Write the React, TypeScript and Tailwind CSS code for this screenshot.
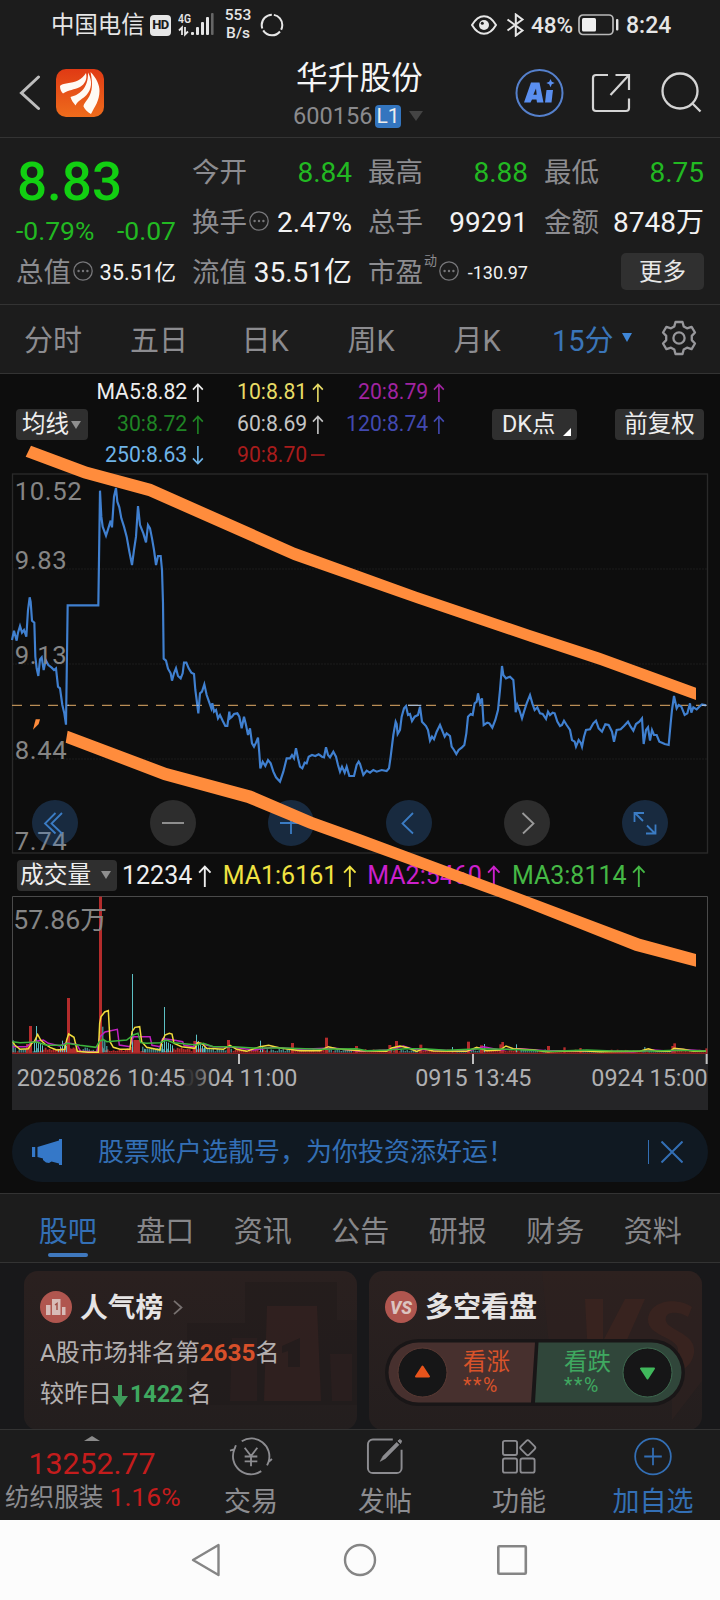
import React from "react";

const PRICE =
  "36,810 42,782 50,812 54,788 60,768 66,788 72,780 79,800 84,720 89,682 92,696 96,752 103,758 106,860 110,895 115,918 120,868 125,862 131,900 137,870 145,885 155,893 162,900 168,895 174,950 180,955 187,1005 193,1030 198,1064 203,706 295,706 300,362 304,440 308,470 318,497 324,478 332,452 336,472 342,380 348,354 352,395 358,412 364,445 372,470 380,500 388,545 396,585 402,540 408,500 414,408 420,465 430,490 438,517 444,465 450,475 456,505 462,540 468,585 474,558 482,558 486,600 489,700 491,866 498,872 504,896 512,910 516,932 522,910 528,895 534,918 542,925 548,910 552,878 559,878 566,895 574,908 582,912 586,960 590,990 595,1030 600,970 606,965 613,943 620,975 627,995 634,1015 637,1000 642,1025 648,1020 654,1045 660,1035 668,1052 676,1068 682,1068 688,1025 690,1045 696,1040 702,1032 712,1030 718,1040 725,1075 732,1040 738,1065 744,1095 750,1075 756,1120 762,1130 768,1118 774,1103 778,1150 781,1195 788,1175 796,1188 804,1170 812,1180 820,1205 828,1222 840,1235 850,1205 860,1165 870,1165 876,1155 882,1165 888,1135 894,1165 900,1190 907,1195 914,1178 920,1180 926,1160 936,1155 946,1158 956,1153 966,1160 972,1162 978,1132 984,1155 990,1162 1000,1145 1008,1160 1014,1185 1020,1205 1026,1190 1034,1208 1040,1190 1048,1218 1062,1218 1070,1185 1076,1175 1080,1182 1090,1215 1100,1202 1110,1208 1120,1200 1130,1205 1145,1200 1160,1203 1167,1195 1172,1160 1180,1095 1187,1055 1190,1062 1193,1092 1200,1080 1205,1040 1212,1015 1218,1008 1224,1035 1230,1032 1236,1053 1244,1040 1254,1035 1260,1010 1266,1055 1278,1068 1284,1080 1290,1112 1296,1100 1302,1108 1310,1085 1320,1065 1328,1085 1334,1100 1340,1090 1350,1098 1355,1130 1362,1140 1369,1152 1376,1140 1386,1132 1393,1125 1399,1090 1404,1040 1412,1032 1418,1035 1424,1000 1430,995 1434,970 1440,1000 1446,985 1451,1065 1462,1058 1468,1060 1477,1073 1486,1050 1494,1020 1500,960 1506,888 1510,915 1518,925 1530,920 1540,930 1546,1000 1547,1027 1552,1005 1558,1020 1566,1045 1572,1025 1580,1000 1590,975 1597,1000 1604,1020 1612,1012 1620,1030 1628,1032 1638,1047 1644,1025 1650,1035 1658,1028 1664,1030 1672,1055 1680,1068 1686,1065 1692,1052 1700,1065 1710,1080 1716,1110 1724,1115 1728,1130 1736,1110 1742,1118 1746,1130 1752,1100 1758,1080 1770,1078 1780,1060 1788,1052 1796,1075 1806,1085 1816,1063 1826,1065 1836,1085 1842,1115 1850,1080 1862,1078 1872,1068 1884,1055 1892,1070 1900,1082 1908,1062 1918,1055 1926,1045 1931,1122 1938,1080 1944,1072 1950,1112 1956,1080 1962,1095 1970,1095 1978,1115 1986,1118 1994,1122 2006,1125 2012,1060 2016,1020 2022,978 2030,1015 2036,1005 2044,1010 2054,1035 2062,1030 2070,1000 2074,1028 2080,1012 2090,1018 2098,1010 2106,1003 2118,1006";

const VMA1 =
  "38,545 45,556 60,568 85,566 95,550 103,545 113,523 122,540 135,552 150,562 170,570 195,568 200,540 206,522 222,532 232,574 265,577 295,577 299,490 303,470 314,456 325,452 330,545 340,562 360,568 390,568 396,515 405,502 419,500 425,545 440,562 480,570 486,545 495,525 508,520 516,522 522,550 545,560 585,565 592,548 605,550 620,565 670,568 690,556 710,568 740,574 780,560 806,556 840,564 900,572 960,572 985,560 1010,566 1080,572 1160,574 1175,564 1200,558 1225,564 1250,574 1270,566 1300,573 1400,574 1430,562 1460,572 1500,570 1518,558 1540,566 1600,570 1640,575 1740,572 1800,575 1920,574 1945,566 1970,574 2010,574 2022,565 2050,568 2080,574 2118,574";
const VMA2 =
  "38,560 80,560 100,545 130,540 145,550 180,558 200,548 230,553 242,574 290,576 300,530 315,516 352,508 358,555 390,560 400,530 450,530 456,556 480,560 488,536 520,540 548,545 552,556 580,560 590,548 640,560 700,562 760,570 820,562 900,568 1000,564 1080,574 1170,570 1210,558 1240,568 1300,570 1400,574 1450,560 1500,570 1560,566 1640,572 1760,572 1900,575 1960,570 2010,574 2040,568 2118,573";
const VMA3 =
  "38,545 60,548 110,546 140,556 190,556 200,550 240,556 288,562 298,545 310,538 320,545 380,540 400,525 414,520 422,548 440,550 480,548 500,540 520,548 560,552 590,555 610,550 640,560 700,560 760,564 850,564 960,568 1070,566 1100,572 1160,570 1220,566 1270,566 1340,571 1440,566 1520,568 1580,570 1660,574 1760,570 1840,573 1960,573 2030,571 2118,573";

const RED_BARS: number[][] = [
  [297, 9, 110], [201, 9, 414], [87, 9, 498], [78, 8, 552], [302, 7, 560], [580, 8, 543], [681, 9, 540],
  [873, 9, 549], [975, 9, 533], [1065, 9, 558], [1165, 9, 555], [1185, 9, 543], [1258, 9, 554],
  [1401, 9, 545], [1440, 9, 556], [1498, 8, 553], [1504, 8, 546], [1641, 9, 558], [1690, 7, 562],
  [1738, 7, 564], [2014, 8, 558], [2020, 8, 550], [2116, 6, 565], [400, 20, 540], [392, 8, 560], [210, 22, 566],
];
const CYAN_BARS: number[][] = [
  [38, 541], [108, 498], [102, 540], [114, 545], [120, 550], [126, 556], [174, 568], [180, 560], [186, 542], [192, 552],
  [198, 558], [307, 500], [313, 540], [319, 558], [396, 342], [427, 560], [433, 566], [492, 441], [486, 552], [498, 545],
  [504, 548], [510, 552], [516, 556], [588, 524], [594, 543], [600, 552], [606, 558], [612, 562], [780, 542], [786, 560],
  [1356, 561], [1452, 552], [1548, 553], [1933, 561],
];

const noise = Array.from({ length: 346 }, (_, i) => {
  const r = Math.abs(Math.sin(i * 12.9898) * 43758.5453) % 1;
  const x = 38 + i * 6;
  const base = x < 650 ? 10 : x < 1100 ? 7 : 5;
  const cyan = Math.sin(i / 5) + r > 0.9;
  return { x, h: 3 + r * base, cyan };
});

function Up({ className = "", dir = "up", h = 20 }: { className?: string; dir?: "up" | "down" | "flat"; h?: number }) {
  return (
    <svg className={className} width={h * 0.62} height={h} viewBox="0 0 12.4 20" fill="none" stroke="currentColor" strokeWidth="1.7">
      {dir === "up" && <path d="M6.2 20V1.5M1 7l5.2-5.6L11.4 7" />}
      {dir === "down" && <path d="M6.2 0v18.5M1 13l5.2 5.6 5.2-5.6" />}
      {dir === "flat" && <path d="M-1 9.5h14.4" />}
    </svg>
  );
}

function Dots() {
  return (
    <svg width="20" height="20" viewBox="0 0 20 20" className="shrink-0">
      <circle cx="10" cy="10" r="9.2" fill="none" stroke="#77777a" strokeWidth="1.3" />
      <g fill="#77777a">
        <circle cx="5.6" cy="10" r="1.2" />
        <circle cx="10" cy="10" r="1.2" />
        <circle cx="14.4" cy="10" r="1.2" />
      </g>
    </svg>
  );
}

function StatusBar() {
  return (
    <div className="flex h-[50px] items-center pl-[51px] text-[#e6e6e6]">
      <span className="mt-px w-[99px] whitespace-nowrap text-[23.4px] leading-none">中国电信</span>
      <span className="flex h-[21px] w-[21px] shrink-0 items-center justify-center rounded-[4px] bg-[#e6e6e6] text-[13px] font-extrabold tracking-[-0.5px] text-[#1c1c1c]">HD</span>
      <svg className="ml-[7px]" width="38" height="26" viewBox="0 0 38 26">
        <text x="0" y="11" fontSize="12.5" fontWeight="600" fill="#e6e6e6" textLength="13" lengthAdjust="spacingAndGlyphs">4G</text>
        <g stroke="#e6e6e6" strokeWidth="1.8" fill="none">
          <path d="M4 23v-7.500l-3 3M7 15v7.500l3-3" />
        </g>
        <g fill="#e6e6e6">
          <rect x="13" y="20" width="3" height="3" rx="1" />
          <rect x="18" y="15" width="3" height="8" rx="1" />
          <rect x="23" y="10" width="3" height="13" rx="1" />
          <rect x="28" y="5" width="3" height="18" rx="1" />
          <rect x="33" y="1" width="2.600" height="22" rx="1" fill="#666" />
        </g>
      </svg>
      <span className="-mt-[2px] ml-[7px] flex w-[30px] flex-col items-center text-[15.500px] font-medium leading-[18.300px]">
        <span>553</span>
        <span>B/s</span>
      </span>
      <svg className="ml-[7px] -mt-px" width="24" height="24" viewBox="0 0 24 24" fill="none" stroke="#e6e6e6" strokeWidth="2">
        <circle cx="12" cy="12" r="10.300" strokeDasharray="19.500 2.070" strokeDashoffset="-7" />
      </svg>
      <svg className="ml-[187px] -mt-px" width="26" height="20" viewBox="0 0 26 20" fill="none" stroke="#e6e6e6" strokeWidth="2">
        <path d="M1 10C4.500 4 8.500 1.200 13 1.200S21.500 4 25 10c-3.500 6-7.500 8.800-12 8.800S4.500 16 1 10z" />
        <circle cx="13" cy="10" r="5" fill="#e6e6e6" stroke="none" />
        <circle cx="11.300" cy="8.300" r="1.500" fill="#1c1c1c" stroke="none" />
      </svg>
      <svg className="ml-[9px] -mt-px" width="20" height="24" viewBox="0 0 20 24" fill="none" stroke="#e6e6e6" strokeWidth="2">
        <path d="M1.500 6.500l15 11-6.700 5V1.500l6.700 5-15 11" />
      </svg>
      <span className="ml-[5px] w-[47px] text-[22.500px] font-medium leading-none">48%</span>
      <svg className="-mt-px" width="41" height="22" viewBox="0 0 41 22">
        <rect x="1" y="1" width="34" height="19.500" rx="4" fill="none" stroke="#b8b8b8" strokeWidth="1.700" />
        <rect x="4" y="4" width="14" height="13.500" rx="1.500" fill="#f0f0f0" />
        <rect x="38" y="5" width="2.400" height="11.500" rx="1" fill="#e6e6e6" />
      </svg>
      <span className="ml-[7px] text-[23px] font-medium leading-none">8:24</span>
    </div>
  );
}

function Header() {
  return (
    <div className="flex h-[88px] items-start border-b border-[#333] pl-[19px]">
      <svg className="mt-[25px]" width="22" height="36" viewBox="0 0 22 36" fill="none" stroke="#bdbdbd" strokeWidth="3" strokeLinecap="round">
        <path d="M19.500 2L2.500 18 19.500 33.500" />
      </svg>
      <svg className="ml-[15px] mt-[19px]" width="48" height="48" viewBox="0 0 48 48">
        <defs>
          <linearGradient id="logo" x1="0" y1="0" x2="0" y2="1">
            <stop offset="0" stopColor="#e03a14" />
            <stop offset="1" stopColor="#ee6c1c" />
          </linearGradient>
        </defs>
        <rect width="48" height="48" rx="10" fill="url(#logo)" />
        <g fill="#fffaf4">
          <path d="M4 17c2-3 12-2.500 18-5.500 3.500-2 6-4.500 8-7.500 1.500 6-1 11-6 14-6 3-11 2.500-17 6.500C5 23 4 20 4 17z" />
          <path d="M14.500 28c8-2 18-8 17.500-24.500 5 9 3.500 17-1.500 22.500-4 4-8.500 5.500-11 10.500-2-2.500-4-5-5-8.500z" />
          <path d="M34.500 3c6 6 9 13 9 19 0 10-5 16-8.500 23-3.500-2-6-4-7.500-7.500 1-7 12.500-9 7-34.500z" />
        </g>
      </svg>
      <div className="ml-[192px] flex w-[131px] flex-col">
        <div className="mt-[11px] whitespace-nowrap text-[31.700px] leading-[36px] text-[#f5f5f5]">华升股份</div>
        <div className="mt-[2px] flex items-center">
          <span className="-ml-[3px] w-[82px] text-[23.600px] leading-[34px] text-[#8a8a8d]">600156</span>
          <span className="flex h-[23px] w-[26px] shrink-0 items-center justify-center rounded-[4px] bg-[#3375bf] text-[21px] leading-none text-[#eee]">L1</span>
          <svg className="ml-[8px] shrink-0" width="14" height="10">
            <path d="M0 0h14l-7 10z" fill="#444" />
          </svg>
        </div>
      </div>
      <svg className="ml-[88px] mt-[18px]" width="50" height="50" viewBox="0 0 50 50">
        <circle cx="24.500" cy="25" r="23" fill="none" stroke="#5580cc" strokeWidth="2" />
        <path d="M16 14.500h8.500l4 20h-6.500l-.500-3h-4.500l-1.500 3H9zM21 20.500l-2.700 6.300h3.400z" fill="#5a8ff0" fillRule="evenodd" />
        <path d="M31.500 22h6.500l-1.500 12.500h-6.500z" fill="#5a8ff0" />
        <path d="M35.500 11l1.300 2.700 2.900 1.300-2.900 1.300-1.300 2.900-1.300-2.900-2.900-1.300 2.900-1.300z" fill="#5a8ff0" />
      </svg>
      <svg className="ml-[26px] mt-[23px]" width="42" height="42" viewBox="0 0 42 42" fill="none" stroke="#d4d4d4" strokeWidth="2.200">
        <path d="M17 2H5a3 3 0 00-3 3v30a3 3 0 003 3h30a3 3 0 003-3V25.500M24.500 2H38v15M37.500 2.500L19.500 22" />
      </svg>
      <svg className="ml-[28px] mt-[22px]" width="42" height="42" viewBox="0 0 42 42" fill="none" stroke="#d4d4d4" strokeWidth="2.300">
        <circle cx="19" cy="19" r="17.500" />
        <path d="M31.500 31.500l8 8" />
      </svg>
    </div>
  );
}

const lab = "text-[27.500px] text-[#8c8c90] whitespace-nowrap";

function Quote() {
  return (
    <div className="grid h-[167px] grid-cols-4 gap-x-4 border-b border-[#333] px-4 pt-[10px] text-[28px] text-[#f2f2f2]">
      <div>
        <div className="pl-px text-[53px] font-medium leading-[68px] text-[#12cf12]">8.83</div>
        <div className="flex justify-between text-[26.500px] leading-[29px] text-[#22b922]">
          <span>-0.79%</span>
          <span>-0.07</span>
        </div>
        <div className="mt-[3px] flex h-[50px] items-center whitespace-nowrap leading-[50px]">
          <span className={lab}>总值</span>
          <span className="ml-[2px] -mt-1"><Dots /></span>
          <span className="ml-auto text-[21.800px]">35.51亿</span>
        </div>
      </div>
      <div className="leading-[50px]">
        <div className="flex h-[50px] justify-between">
          <span className={lab}>今开</span>
          <span className="text-[#22b922]">8.84</span>
        </div>
        <div className="flex h-[50px] items-center whitespace-nowrap">
          <span className={lab}>换手</span>
          <span className="ml-[2px] -mt-1"><Dots /></span>
          <span className="ml-auto">2.47%</span>
        </div>
        <div className="flex h-[50px] justify-between whitespace-nowrap">
          <span className={lab}>流值</span>
          <span>35.51亿</span>
        </div>
      </div>
      <div className="leading-[50px]">
        <div className="flex h-[50px] justify-between">
          <span className={lab}>最高</span>
          <span className="text-[#22b922]">8.88</span>
        </div>
        <div className="flex h-[50px] justify-between">
          <span className={lab}>总手</span>
          <span>99291</span>
        </div>
        <div className="flex h-[50px] items-center whitespace-nowrap">
          <span className={lab}>市盈</span>
          <span className="-mt-[25px] ml-[1px] text-[13px] text-[#8c8c90]">动</span>
          <span className="-mt-1 ml-[2px]"><Dots /></span>
          <span className="ml-auto text-[18px]">-130.97</span>
        </div>
      </div>
      <div className="leading-[50px]">
        <div className="flex h-[50px] justify-between">
          <span className={lab}>最低</span>
          <span className="text-[#22b922]">8.75</span>
        </div>
        <div className="flex h-[50px] justify-between whitespace-nowrap">
          <span className={lab}>金额</span>
          <span>8748万</span>
        </div>
        <div className="ml-auto mt-[5px] flex h-[37px] w-[83px] items-center justify-center rounded-[5px] bg-[#303030] text-[23.500px] text-[#e8e8e8]">更多</div>
      </div>
    </div>
  );
}

function PeriodTabs() {
  return (
    <div className="flex h-[69px] items-center border-b border-[#333] text-[29px] text-[#8c8c90]">
      {["分时", "五日", "日K", "周K", "月K"].map((t) => (
        <span key={t} className="w-[106px] pt-[4px] text-center leading-[65px]">{t}</span>
      ))}
      <span className="ml-[22px] w-[70px] whitespace-nowrap pt-[4px] leading-[65px] text-[#3a75b8]">15分</span>
      <svg width="10" height="9" className="-mt-1"><path d="M0 0h10l-5 9z" fill="#3f87d8" /></svg>
      <svg className="-mt-[2px] ml-[29px]" width="36" height="36" viewBox="0 0 36 36" fill="none" stroke="#97979b" strokeWidth="2.300" strokeLinejoin="round">
        <path d="M14.500 2h7l1.200 4.400 3.300 1.900 4.600-1.500 3.400 5.700-3.200 3.400v4.200l3.200 3.400-3.400 5.700-4.600-1.500-3.300 1.900-1.200 4.400h-7l-1.200-4.400-3.300-1.900-4.600 1.500L2 23.500l3.200-3.400v-4.200L2 12.500l3.400-5.700L10 8.300l3.300-1.900z" />
        <circle cx="18" cy="18" r="5.600" />
      </svg>
    </div>
  );
}

const MA = [
  ["MA5:8.82", "text-[#eee]", "up"], ["10:8.81", "text-[#e8dc66]", "up"], ["20:8.79", "text-[#a024a0]", "up"],
  ["30:8.72", "text-[#1f8424]", "up"], ["60:8.69", "text-[#c4c4c4]", "up"], ["120:8.74", "text-[#4249b0]", "up"],
  ["250:8.63", "text-[#6fb4e8]", "down"], ["90:8.70", "text-[#a81c1c]", "flat"],
];

function Indicators() {
  return (
    <div className="flex h-[97px] items-start pl-4 pt-[2px]">
      <div className="mt-[33px] flex h-[31px] w-[72px] shrink-0 items-center gap-[2px] whitespace-nowrap rounded-[4px] bg-[#2f2f2f] pl-[6px] text-[23.500px] text-[#eee]">
        均线
        <svg width="10" height="8"><path d="M0 0h10l-5 8z" fill="#8f8f8f" /></svg>
      </div>
      <div className="grid shrink-0 grid-cols-[116px_120px_121px] text-[21.200px]">
        {MA.map(([t, c, d]) => (
          <div key={t} className={"flex h-[31.700px] items-center justify-end gap-[5px] whitespace-nowrap leading-[31.700px] " + c}>
            <span>{t}</span>
            <Up dir={d as "up"} h={19} className="mt-[1px] overflow-visible" />
          </div>
        ))}
      </div>
      <div className="ml-[47px] mt-[33px] flex h-[31px] w-[85px] shrink-0 items-center whitespace-nowrap rounded-[4px] bg-[#2f2f2f] pl-[10px] text-[23.300px] text-[#eee]">
        DK点
        <svg className="ml-[8px] mt-[14px]" width="8" height="8"><path d="M8 0v8H0z" fill="#fff" /></svg>
      </div>
      <div className="ml-[38px] mt-[33px] flex h-[31px] w-[89px] shrink-0 items-center justify-center whitespace-nowrap rounded-[4px] bg-[#2f2f2f] text-[23.500px] text-[#eee]">前复权</div>
    </div>
  );
}

const CONTROLS: { blue: boolean; d: string }[] = [
  { blue: true, d: "M23.500 13L13 23.500l10.500 10M30 13L19.500 23.500l10.500 10" },
  { blue: false, d: "M12 23h22" },
  { blue: true, d: "M12 23h22M23 12v22" },
  { blue: true, d: "M27 13L16.500 23.500l10.500 10" },
  { blue: false, d: "M18.500 13L29.500 23.500l-10.500 10" },
  { blue: true, d: "M21 21l-8-8M12.500 22V13H22M25 25.500l8 8M33.500 24.500v9H24" },
];

function PriceChart() {
  return (
    <div className="relative h-[386px]">
      <svg className="block" width="720" height="386" viewBox="0 303 2160 1158">
        <g stroke="#262626" strokeWidth="3" strokeDasharray="4 5">
          <path d="M37 597H2122M37 882H2122M37 1167H2122" />
        </g>
        <rect x="37.500" y="312" width="2085" height="1137" fill="none" stroke="#2a2a2a" strokeWidth="4" />
        <path d="M36 1006H2118" stroke="#b98d56" strokeWidth="4" strokeDasharray="30 24" />
        <polyline points={PRICE} fill="none" stroke="#4080d0" strokeWidth="6.500" strokeLinejoin="miter" />
        <path d="M203 1006h4M590 1006h6M1224 1006h40M2106 1006h14" stroke="#a8b8cc" strokeWidth="4" />
        <g fill="#858585" fontSize="77" letterSpacing="2">
          <text x="44" y="390">10.52</text>
          <text x="44" y="597">9.83</text>
          <text x="44" y="882">9.13</text>
          <text x="44" y="1167">8.44</text>
          <text x="44" y="1440">7.74</text>
        </g>
      </svg>
      <div className="absolute left-8 top-[329px] flex gap-[72px]">
        {CONTROLS.map((c, i) => (
          <div key={i} className={"h-[46px] w-[46px] rounded-full " + (c.blue ? "bg-[#3a84d8]/25" : "bg-[#2d2d2d]")}>
            <svg width="46" height="46" viewBox="0 0 46 46" fill="none" stroke={c.blue ? "#3b7cc4" : "#9a9a9a"} strokeWidth="1.800">
              <path d={c.d} />
            </svg>
          </div>
        ))}
      </div>
    </div>
  );
}

function VolumeHeader() {
  return (
    <div className="flex h-[38px] items-center pl-[17px] text-[25px] leading-[38px]">
      <div className="-mt-[2px] flex h-[31px] w-[100px] items-center gap-[10px] whitespace-nowrap rounded-[4px] bg-[#2f2f2f] pl-[3px] text-[23.700px] text-[#eee]">
        成交量
        <svg width="10" height="8"><path d="M0 0h10l-5 8z" fill="#8f8f8f" /></svg>
      </div>
      <span className="ml-[5px] w-[77px] text-[#eee]">12234</span>
      <Up h={22} className="-ml-[1px] -mt-[1px] text-[#eee]" />
      <span className="ml-[11px] w-[120px] text-[#f0e242]">MA1:6161</span>
      <Up h={22} className="-mt-[1px] text-[#f0e242]" />
      <span className="ml-[11px] w-[120px] text-[#cc20cc]">MA2:5460</span>
      <Up h={22} className="-mt-[1px] text-[#cc20cc]" />
      <span className="ml-[11px] w-[120px] text-[#45b845]">MA3:8114</span>
      <Up h={22} className="-mt-[1px] text-[#45b845]" />
    </div>
  );
}

function VolumeChart() {
  return (
    <svg className="block" width="720" height="217" viewBox="0 105 2160 651">
      <defs>
        <linearGradient id="fade">
          <stop offset="0" stopColor="#252527" />
          <stop offset="0.350" stopColor="#252527" stopOpacity="0.850" />
          <stop offset="1" stopColor="#252527" stopOpacity="0" />
        </linearGradient>
      </defs>
      <rect x="36" y="582" width="2088" height="168" fill="#252527" />
      <path d="M37.500 582V109.500H2122.500V582" fill="none" stroke="#4a4a4a" strokeWidth="3" />
      {noise.map((n) => (
        <rect key={n.x} x={n.x} y={578 - n.h * 1.2} width={n.cyan ? 3 : 5.5} height={n.h * 1.2} fill={n.cyan ? "#5cc0c4" : "#b42c2c"} />
      ))}
      {RED_BARS.map(([x, w, y]) => (
        <rect key={x} x={x} y={y} width={w} height={579 - y} fill="#b42c2c" />
      ))}
      {CYAN_BARS.map(([x, y]) => (
        <rect key={x} x={x} y={y} width="3" height={577 - y} fill="#5cc0c4" />
      ))}
      <path d="M36 580H2122" stroke="#8c2222" strokeWidth="4" />
      <g fill="none" strokeWidth="4.500">
        <polyline points={VMA2} stroke="#c020c0" />
        <polyline points={VMA1} stroke="#f0dc3c" />
        <polyline points={VMA3} stroke="#3cb43c" />
      </g>
      <text x="40" y="208" fontSize="80" fill="#858585">57.86万</text>
      <path d="M717 582v30M1419 582v30M2120 582v30" stroke="#c0c0c0" strokeWidth="6" />
      <g fill="#b0b0b2" fontSize="70">
        <text x="718" y="679" textAnchor="middle">0904 11:00</text>
        <rect x="545" y="615" width="95" height="80" fill="url(#fade)" />
        <text x="50" y="679">20250826 10:45</text>
        <text x="1420" y="679" textAnchor="middle">0915 13:45</text>
        <text x="2123" y="679" textAnchor="end">0924 15:00</text>
      </g>
    </svg>
  );
}

function Banner() {
  return (
    <div className="mx-3 mt-[10px] flex h-[60px] items-center rounded-full bg-[#101922] pl-[20px] text-[#336fb5]">
      <svg width="31" height="28" viewBox="0 0 31 28" fill="#3578c8">
        <path d="M0 9h3.200v10H0zM5.500 9L27 2.500V1h3v26h-3v-1.500l-7.500-2L17 25l-3-.500-3-2.500V20.500L5.500 19z" />
      </svg>
      <span className="ml-[35px] w-[550px] whitespace-nowrap text-[26px] leading-[60px]">股票账户选靓号，为你投资添好运！</span>
      <span className="h-6 w-px bg-[#336fb5]" />
      <svg className="ml-[12px]" width="22" height="22" viewBox="0 0 22 22" stroke="#336fb5" strokeWidth="2">
        <path d="M.5.5l21 21M21.500.5L.5 21.500" />
      </svg>
    </div>
  );
}

function InfoTabs() {
  return (
    <div className="mt-[11px] flex h-[70px] border-y border-[#333] bg-[#1c1c1c] pl-[19px] text-[29px] text-[#87878a]">
      {["股吧", "盘口", "资讯", "公告", "研报", "财务", "资料"].map((t, i) => (
        <div key={t} className={"flex w-[97.500px] flex-col items-center " + (i === 0 ? "text-[#336fb5]" : "")}>
          <span className="mt-[5px] leading-[66px]">{t}</span>
          {i === 0 && <span className="-mt-[12px] h-1 w-10 rounded-full bg-[#3f78be]" />}
        </div>
      ))}
    </div>
  );
}

function Cards() {
  return (
    <div className="flex h-[166px] gap-3 overflow-hidden bg-[#18181a] pl-6 pt-2">
      <div className="relative h-[159px] w-[333px] overflow-hidden rounded-[14px] bg-gradient-to-b from-[#2a201f] to-[#231e1e] px-4">
        <svg className="absolute right-0 top-0" width="190" height="159" viewBox="0 0 190 159">
          <path d="M78 11h92v38h20v85H20V52h58z" fill="#1f1a1a" opacity=".4" />
          <path d="M100 35h50l4 95H97z" fill="#342120" opacity=".75" />
          <path d="M65 67h25v63H63zM163 83h22v47h-20z" fill="#2f201f" opacity=".6" />
          <path d="M115 75l18-8v29h-12V80l-6 2z" fill="#241c1c" />
        </svg>
        <div className="relative flex h-[72px] items-center">
          <svg width="32" height="32" viewBox="0 0 32 32">
            <circle cx="16" cy="16" r="16" fill="#b0564f" />
            <path d="M12 8h8.500v16H12zM6 14h4.500v10H6zM22 16h3.500v8H22z" fill="#d8bcb8" />
            <path d="M15 14l2-1.500V19" fill="none" stroke="#a05048" strokeWidth="1.500" />
          </svg>
          <span className="ml-[8px] mt-[2px] text-[27.700px] font-bold leading-[70px] text-[#e6e4e4]">人气榜</span>
          <svg className="ml-[10px]" width="10" height="15" viewBox="0 0 10 15" fill="none" stroke="#77706f" strokeWidth="1.800"><path d="M1 .8l7.500 6.700L1 14.200" /></svg>
        </div>
        <div className="relative -mt-[11px] whitespace-nowrap text-[24px] leading-[41px] text-[#b4b0b0]">
          A股市场排名第<b className="text-[24.300px] text-[#d8502a]">2635</b>名
        </div>
        <div className="relative flex items-center whitespace-nowrap text-[24px] leading-[41px] text-[#b4b0b0]">
          较昨日
          <svg className="mt-[2px]" width="16" height="22" viewBox="0 0 16 22" fill="#3f9a5a"><path d="M6 0h4v11h6l-8 11L0 11h6z" /></svg>
          <b className="ml-[2px] mr-[4px] text-[23.300px] text-[#3fa860]">1422</b>名
        </div>
      </div>
      <div className="relative h-[159px] w-[333px] overflow-hidden rounded-[14px] bg-gradient-to-b from-[#2b2120] to-[#241e1e] px-4">
        <svg className="absolute right-0 top-0" width="165" height="159" viewBox="0 0 165 159">
          <path d="M5 0h160v110l-30 39V75H12z" fill="#2f2120" opacity=".6" />
          <path d="M48 28h18v42l22-42h20L74 105H52z" fill="#38231f" />
          <path d="M155 36c-14-10-42-8-44 12-1 18 32 18 30 32-1 10-20 10-32 2l-4 16c18 8 48 8 52-16 3-22-32-22-28-36 2-6 14-5 22 0z" fill="#38231f" />
        </svg>
        <div className="relative flex h-[72px] items-center">
          <svg width="32" height="32" viewBox="0 0 32 32">
            <circle cx="16" cy="16" r="16" fill="#b0564f" />
            <text x="5" y="23" fontSize="19" fontWeight="800" fontStyle="italic" fill="#dcc4c0" textLength="22" lengthAdjust="spacingAndGlyphs">VS</text>
          </svg>
          <span className="ml-[8px] mt-[2px] text-[28px] font-bold leading-[70px] text-[#e6e4e4]">多空看盘</span>
        </div>
        <div className="relative -mt-[4px] h-[67px] w-[300px]">
          <svg className="absolute inset-0" width="300" height="67" viewBox="0 0 300 67">
            <rect width="300" height="67" rx="33.500" fill="#191617" />
            <path d="M33.500 3.500H150l-4 60H33.500a30 30 0 010-60z" fill="#47302e" />
            <path d="M153.500 3.500H266.500a30 30 0 010 60H150z" fill="#30463a" />
            <circle cx="37.500" cy="33.500" r="24.500" fill="#161617" stroke="#5a3a34" />
            <circle cx="262.500" cy="33.500" r="24.500" fill="#161617" stroke="#3f6a50" />
            <path d="M37.500 27.500l6.500 10h-13z" fill="#e8541c" stroke="#e8541c" strokeWidth="2" strokeLinejoin="round" />
            <path d="M262.500 39.500l-6.500-10h13z" fill="#40b85c" stroke="#40b85c" strokeWidth="2" strokeLinejoin="round" />
          </svg>
          <div className="relative flex pl-[78px] pt-[8px] text-[23.500px] leading-[30px]">
            <div className="w-[101px] text-[#d8532a]">
              <div>看涨</div>
              <div className="-mt-[3px] text-[19.500px] leading-[24px] tracking-[1.600px]">**%</div>
            </div>
            <div className="text-[#3fa860]">
              <div>看跌</div>
              <div className="-mt-[3px] text-[19.500px] leading-[24px] tracking-[1.600px]">**%</div>
            </div>
          </div>
        </div>
      </div>
    </div>
  );
}

function BottomNav() {
  const cell = "flex w-[134px] flex-col items-center pt-[7px]";
  const label = "mt-[8px] text-[27px] leading-[36px] h-[36px]";
  return (
    <div className="flex h-[91px] border-t border-[#333] bg-[#1c1c1c] text-[#8c8c90]">
      <div className="flex w-[184px] flex-col items-center whitespace-nowrap pt-[6px]">
        <svg width="16" height="5"><path d="M8 0l8 5H0z" fill="#8a8a8a" /></svg>
        <div className="mt-[5px] text-[30.300px] leading-[36px] text-[#c41c1c]">13252.77</div>
        <div className="-mt-px self-start pl-[5px] text-[24.600px] leading-[32px]">
          纺织服装 <span className="text-[26.500px] text-[#c41c1c]">1.16%</span>
        </div>
      </div>
      <div className={cell}>
        <svg width="44" height="40" viewBox="0 0 44 40" fill="none" stroke="#8c8c90" strokeWidth="1.900">
          <path d="M12.500 4.300A18.500 18.500 0 0140 25.500l3.500-3M40 25.500l-1.500 3.500M32.500 35A18.500 18.500 0 015 12.500L0.500 14M5 12.500l1.500-4M15.500 11l6.500 8.500L28.500 11M22 19.500V30M15.500 20h13M15.500 25h13" />
        </svg>
        <span className={label}>交易</span>
      </div>
      <div className={cell}>
        <svg width="40" height="40" viewBox="0 0 40 40" fill="none" stroke="#8c8c90" strokeWidth="2">
          <path d="M28 2.500H7.500a5 5 0 00-5 5V32a5 5 0 005 5H32a5 5 0 005-5V13" />
          <path d="M15 25l3-5.500L32 5.500l2.500 2.500-14 14z" fill="#8c8c90" strokeWidth="0.500" />
          <path d="M33.300 4l2.700 2.700 1-2.700-1.500-1.500z" fill="#8c8c90" strokeWidth="1" />
        </svg>
        <span className={label}>发帖</span>
      </div>
      <div className={cell}>
        <svg width="40" height="40" viewBox="0 0 40 40" fill="none" stroke="#8c8c90" strokeWidth="1.900" strokeLinejoin="round">
          <rect x="3.500" y="4" width="14.500" height="14.500" rx="2" />
          <rect x="3.500" y="22" width="14.500" height="14.500" rx="2" />
          <rect x="21.500" y="22" width="14.500" height="14.500" rx="2" />
          <rect x="23" y="5" width="12" height="12" rx="2" transform="rotate(45 29 11)" />
        </svg>
        <span className={label}>功能</span>
      </div>
      <div className={cell + " text-[#336fb5]"}>
        <svg width="40" height="40" viewBox="0 0 40 40" fill="none" stroke="currentColor" strokeWidth="1.800">
          <circle cx="20" cy="20" r="18.300" />
          <path d="M11 20h18M20 11v18" />
        </svg>
        <span className={label}>加自选</span>
      </div>
    </div>
  );
}

function SystemNav() {
  return (
    <div className="flex h-[80px] items-center bg-[#fcfcfc] pl-[190px]">
      <svg width="32" height="36" viewBox="0 0 32 36" fill="none" stroke="#858585" strokeWidth="2.400" strokeLinejoin="round"><path d="M28.500 3v30L3 18z" /></svg>
      <svg className="ml-[120px]" width="36" height="36" viewBox="0 0 36 36" fill="none" stroke="#858585" strokeWidth="2.400"><circle cx="18" cy="18" r="15" /></svg>
      <svg className="ml-[116px]" width="36" height="36" viewBox="0 0 36 36" fill="none" stroke="#858585" strokeWidth="2.600"><rect x="4.300" y="4.300" width="27.500" height="27.500" rx="1" /></svg>
    </div>
  );
}

export default function App() {
  return (
    <div className="h-[1600px] w-[720px] overflow-hidden bg-[#0d0d0d] font-[Roboto,'Noto_Sans_CJK_SC',sans-serif]">
      <div className="bg-[#1c1c1c]">
        <StatusBar />
        <Header />
        <Quote />
        <PeriodTabs />
      </div>
      <div className="relative">
        <Indicators />
        <PriceChart />
        <VolumeHeader />
        <VolumeChart />
        <svg className="absolute left-0 top-0" width="720" height="738" viewBox="0 12 2160 2214" fill="#ff8c3c">
          <path d="M93 227L262 290 455 342 885 533 1250 665 1590 780 1800 848 2088 953V990L1800 885 1590 815 1250 700 880 570 445 378 250 325 77 260z" />
          <path d="M203 1082L500 1194 755 1262 940 1342 1080 1392 1290 1470 1580 1578 1920 1706 2088 1752V1790L1905 1742 1560 1605 1190 1470 1080 1430 925 1375 740 1298 490 1230 197 1118z" />
          <path d="M107 1048h13l-4 14-17 17z" />
        </svg>
      </div>
      <Banner />
      <InfoTabs />
      <Cards />
      <BottomNav />
      <SystemNav />
    </div>
  );
}
